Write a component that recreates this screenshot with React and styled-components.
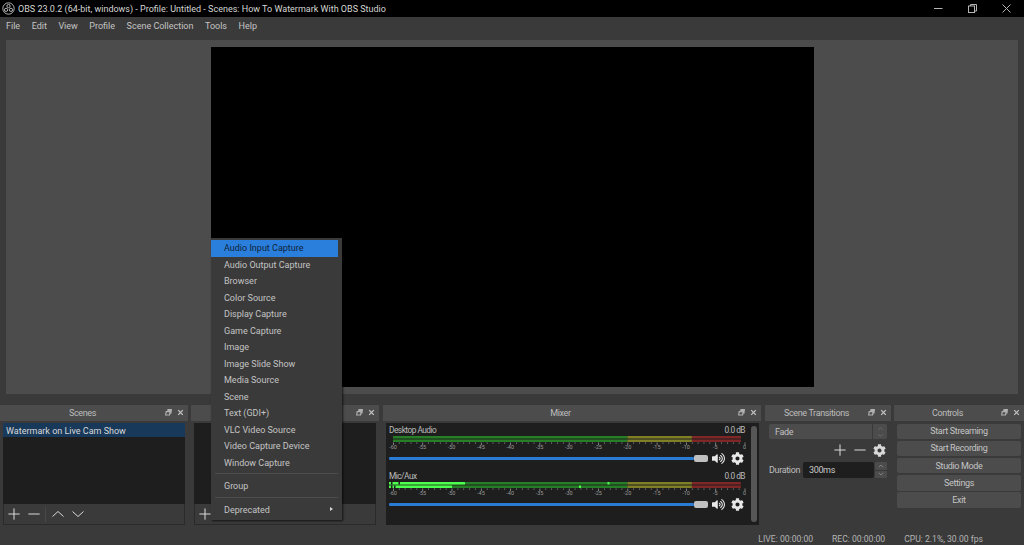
import React from 'react';
import styled, { createGlobalStyle } from 'styled-components';
import { FaCog, FaVolumeUp } from 'react-icons/fa';
import { Plus, Minus, ChevronUp, ChevronDown } from 'lucide-react';

const Global = createGlobalStyle`
  html, body { margin: 0; padding: 0; background: #3a3a3a; overflow: hidden; }
  * { box-sizing: border-box; }
  body { font-family: Roboto, "Open Sans", sans-serif; font-size: 9px; color: #c8c8c8; }
`;

const Page = styled.div`
  position: relative;
  width: 1024px;
  height: 545px;
  display: flex;
  flex-direction: column;
  background: #3a3a3a;
  overflow: hidden;
`;

const TitleBar = styled.div`
  height: 17px;
  background: #000;
  display: flex;
  align-items: center;
  padding-left: 2px;
  color: #d6d6d6;
`;

const TitleText = styled.span`
  margin-left: 3px;
  flex: 1;
`;

const WinBtns = styled.div`
  display: flex;
  align-items: center;
  gap: 25px;
  padding-right: 13px;
  color: #b5b5b5;
`;

const MenuBar = styled.div`
  height: 17px;
  display: flex;
  align-items: center;
  padding-left: 6px;
  gap: 11.500px;
  color: #c4c4c4;
`;

const PreviewPanel = styled.div`
  margin: 6px 6px 0;
  height: 354px;
  background: #4c4c4c;
  display: flex;
  justify-content: center;
  align-items: center;
`;

const PreviewScreen = styled.div`
  width: 603px;
  height: 340px;
  background: #000;
`;

const Docks = styled.div`
  margin-top: 11px;
  display: flex;
  letter-spacing: -.35px;
`;

const Dock = styled.div`
  width: ${p => p.$w}px;
  margin-left: ${p => p.$ml || 0}px;
  display: flex;
  flex-direction: column;
`;

const DockTitle = styled.div`
  position: relative;
  height: 16px;
  padding-right: 23px;
  background: #4c4c4c;
  display: flex;
  align-items: center;
  justify-content: center;
  color: #bdbdbd;
`;

const DockBtns = styled.div`
  position: absolute;
  right: 4px;
  top: 4px;
  display: flex;
  align-items: center;
  gap: 5px;
`;

const DockBody = styled.div`
  margin: 2px 3px 0;
  height: 102px;
  display: flex;
  flex-direction: column;
`;

const List = styled.div`
  flex: 1;
  background: #1e1e1e;
`;

const SelectedRow = styled.div`
  height: 14px;
  background: #19395a;
  color: #d8d8d8;
  letter-spacing: 0;
  padding: 1px 0 0 3px;
  line-height: 14px;
`;

const ListToolbar = styled.div`
  height: 21px;
  background: #3a3a3a;
  border: 1px solid #2a2a2a;
  border-top: 0;
  display: flex;
  align-items: center;
  padding-left: 1px;
  gap: 2px;
  color: #d8d8d8;
`;

const ToolSep = styled.div`
  width: 1px;
  height: 15px;
  background: #484848;
  margin-right: 1px;
`;

const MixerBody = styled.div`
  margin: 2px 2px 0 3px;
  height: 102px;
  background: #1e1e1e;
  display: flex;
  padding: 3px 2px 3px 3px;
`;

const Channels = styled.div`
  width: 357px;
  flex: none;
  display: flex;
  flex-direction: column;
  gap: 7px;
`;

const Channel = styled.div`
  display: flex;
  flex-direction: column;
`;

const ChannelHead = styled.div`
  display: flex;
  justify-content: space-between;
  height: 9px;
  line-height: 9px;
  padding-right: 1px;
  font-size: 8.300px;
  letter-spacing: -.5px;
  color: #bcbcbc;
`;

const SliderRow = styled.div`
  display: flex;
  align-items: center;
  height: 13px;
  color: #e8e8e8;
`;

const SliderTrack = styled.div`
  width: 305px;
  height: 3px;
  background: #2a7bd4;
  border-radius: 1px;
`;

const SliderHandle = styled.div`
  width: 14px;
  height: 7px;
  background: #c0c0c0;
  border-radius: 2px;
`;

const VolIcon = styled.span`
  display: flex;
  margin-left: 4px;
  width: 19px;
`;

const ScrollBar = styled.div`
  width: 6px;
  flex: none;
  margin-left: 5px;
  background: #565656;
  border-radius: 3px;
`;

const TransBody = styled.div`
  margin: 3px 4px 0;
  display: flex;
  flex-direction: column;
  height: 101px;
`;

const Combo = styled.div`
  height: 15px;
  background: #4c4c4c;
  border-radius: 2px;
  display: flex;
  align-items: center;
  justify-content: space-between;
  padding-left: 6px;
  color: #c0c0c0;
`;

const ComboArrows = styled.div`
  width: 15px;
  height: 15px;
  border-left: 1px solid #3a3a3a;
  display: flex;
  flex-direction: column;
  align-items: center;
  justify-content: center;
  color: #7d7d7d;
`;

const TransTools = styled.div`
  display: flex;
  justify-content: flex-end;
  align-items: center;
  gap: 2px;
  height: 20px;
  padding-right: 1px;
  margin-top: 1px;
  color: #d8d8d8;
`;

const DurationRow = styled.div`
  display: flex;
  align-items: center;
  height: 16px;
  margin-top: 2px;
  color: #bdbdbd;
`;

const DurationLabel = styled.span`
  width: 34px;
  flex: none;
`;

const DurationInput = styled.div`
  width: 72px;
  height: 16px;
  background: #1e1e1e;
  border-radius: 2px;
  padding-left: 6px;
  line-height: 16px;
  color: #c8c8c8;
`;

const Spin = styled.div`
  margin-left: 1px;
  width: 12px;
  display: flex;
  flex-direction: column;
  gap: 1px;
`;

const SpinBtn = styled.div`
  height: 7.5px;
  background: #4c4c4c;
  border-radius: 1px;
  display: flex;
  align-items: center;
  justify-content: center;
  color: #9a9a9a;
`;

const ControlsBody = styled.div`
  margin: 2.5px 3px 0;
  display: flex;
  flex-direction: column;
  gap: 1.7px;
`;

const ControlButton = styled.div`
  height: 15.5px;
  background: #4c4c4c;
  border-radius: 2px;
  display: flex;
  align-items: center;
  justify-content: center;
  color: #c4c4c4;
`;

const StatusBar = styled.div`
  margin-top: 8px;
  display: flex;
  justify-content: flex-end;
  gap: 19px;
  padding-right: 41px;
  height: 12px;
  line-height: 12px;
  font-size: 8.600px;
  color: #b4b4b4;
`;

const ContextMenu = styled.div`
  position: absolute;
  left: 211px;
  top: 238px;
  width: 131px;
  height: 282px;
  background: #3a3a3a;
  padding: 2px 4px 0 0;
  box-shadow: 1px 1px 2px rgba(0, 0, 0, .7);
`;

const MenuItem = styled.div`
  position: relative;
  height: 16.5px;
  line-height: 16.5px;
  padding-left: 13px;
  background: ${p => (p.$active ? '#2a7fdc' : 'transparent')};
  color: ${p => (p.$active ? '#10233a' : '#c4c4c4')};
`;

const SubArrow = styled.span`
  position: absolute;
  right: 5px;
  top: 5px;
  width: 0;
  height: 0;
  border-left: 3px solid #d8d8d8;
  border-top: 2.5px solid transparent;
  border-bottom: 2.5px solid transparent;
`;

const MenuSep = styled.div`
  height: 1px;
  background: #4c4c4c;
  margin: 2px 0 4px 4px;
`;

const ObsLogo = () => (
  <svg width="13" height="13" viewBox="0 0 24 24" fill="none" stroke="#cfcfcf" strokeWidth="1.6">
    <circle cx="12" cy="12" r="10.5" />
    <circle cx="12" cy="7.5" r="3" />
    <circle cx="7.5" cy="14.5" r="3" />
    <circle cx="16.5" cy="14.5" r="3" />
  </svg>
);

const WinMin = () => (
  <svg width="9" height="9" viewBox="0 0 9 9"><path d="M0 4.5h8.500" stroke="currentColor" /></svg>
);
const WinRestore = () => (
  <svg width="9" height="9" viewBox="0 0 9 9" fill="none" stroke="currentColor">
    <rect x=".5" y="2" width="6" height="6.500" /><path d="M2.500 2V.5h6v6.500H6.500" />
  </svg>
);
const WinClose = () => (
  <svg width="9" height="9" viewBox="0 0 9 9"><path d="M.5.5l8 8M8.500.5l-8 8" stroke="currentColor" /></svg>
);

const DockFloat = () => (
  <svg width="7" height="7" viewBox="0 0 7 7" fill="#b0b0b0">
    <path d="M2.500 0H7L6.500 4.500H5.500L5 6.500H0L.7 2h1.500zM1.700 3.200L1.300 5.500h2.700L4.400 3.200z" />
  </svg>
);
const DockClose = () => (
  <svg width="7" height="7" viewBox="0 0 7 7"><path d="M1.200 1.200l4.600 4.600M5.800 1.200l-4.600 4.600" stroke="#c8c8c8" strokeWidth="1.200" /></svg>
);

const WideUp = () => (
  <svg width="18" height="18" viewBox="0 0 18 18" fill="none" stroke="currentColor"><path d="M3.500 11.500L9 6.500l5.500 5" /></svg>
);
const WideDown = () => (
  <svg width="18" height="18" viewBox="0 0 18 18" fill="none" stroke="currentColor"><path d="M3.500 6.500L9 11.500l5.500-5" /></svg>
);

const labels = [-60, -55, -50, -45, -40, -35, -30, -25, -20, -15, -10, -5, 0];
const px = db => 4 + (db + 60) * 5.86;
const ticks = Array.from({ length: 61 }, (_, i) => i - 60);

// two channel bars, tick ruler and db labels
const Meter = ({ levels = [], peaks = [], gaps = [] }) => (
  <svg width="357" height="17" viewBox="0 0 357 17" style={{ display: 'block', letterSpacing: 0 }}>
    {[0, 3.5].map((y, ch) => (
      <g key={ch}>
        <rect x="4" y={y + 1} width="234.400" height="2.500" fill="#267f26" />
        <rect x="238.400" y={y + 1} width="64.500" height="2.500" fill="#7f7f26" />
        <rect x="302.900" y={y + 1} width="49" height="2.500" fill="#7f2626" />
        {levels[ch] && <rect x="0" y={y + 1} width={levels[ch]} height="2.500" fill="#4cff4c" />}
        {(gaps[ch] || []).map(p => <rect key={p} x={p} y={y + 1} width="1.500" height="2.500" fill="#1e1e1e" />)}
        {(peaks[ch] || []).map(p => <rect key={p} x={p} y={y + 1} width="2" height="2.500" fill="#4cff4c" />)}
      </g>
    ))}
    {ticks.map(d => (
      <rect key={d} x={px(d)} y="7.500" width=".8" height={d % 5 === 0 ? 2.5 : 1.2} fill="#9a9a9a" />
    ))}
    {labels.map(d => (
      <text key={d} x={px(d)} y="14" fontSize="5.500" fill="#9a9a9a" textAnchor="middle" fontFamily="Roboto, sans-serif">{d}</text>
    ))}
  </svg>
);

const MixerChannel = ({ name, levels, peaks, gaps }) => (
  <Channel>
    <ChannelHead><span>{name}</span><span>0.0 dB</span></ChannelHead>
    <Meter levels={levels} peaks={peaks} gaps={gaps} />
    <SliderRow>
      <SliderTrack />
      <SliderHandle />
      <VolIcon><FaVolumeUp size={13} /></VolIcon>
      <FaCog size={13} />
    </SliderRow>
  </Channel>
);

const DockHeader = ({ title }) => (
  <DockTitle>
    {title}
    <DockBtns><DockFloat /><DockClose /></DockBtns>
  </DockTitle>
);

const menuItems = [
  'Audio Input Capture', 'Audio Output Capture', 'Browser', 'Color Source', 'Display Capture',
  'Game Capture', 'Image', 'Image Slide Show', 'Media Source', 'Scene', 'Text (GDI+)',
  'VLC Video Source', 'Video Capture Device', 'Window Capture',
];

export default function App() {
  return (
    <Page>
      <Global />
      <TitleBar>
        <ObsLogo />
        <TitleText>OBS 23.0.2 (64-bit, windows) - Profile: Untitled - Scenes: How To Watermark With OBS Studio</TitleText>
        <WinBtns><WinMin /><WinRestore /><WinClose /></WinBtns>
      </TitleBar>
      <MenuBar>
        {['File', 'Edit', 'View', 'Profile', 'Scene Collection', 'Tools', 'Help'].map(m => <span key={m}>{m}</span>)}
      </MenuBar>
      <PreviewPanel><PreviewScreen /></PreviewPanel>
      <Docks>
        <Dock $w={188}>
          <DockHeader title="Scenes" />
          <DockBody>
            <List><SelectedRow>Watermark on Live Cam Show</SelectedRow></List>
            <ListToolbar>
              <Plus size={18} strokeWidth={1.4} />
              <Minus size={18} strokeWidth={1.4} />
              <ToolSep />
              <WideUp />
              <WideDown />
            </ListToolbar>
          </DockBody>
        </Dock>
        <Dock $w={188} $ml={3}>
          <DockHeader />
          <DockBody>
            <List />
            <ListToolbar><Plus size={18} strokeWidth={1.4} /></ListToolbar>
          </DockBody>
        </Dock>
        <Dock $w={378} $ml={4}>
          <DockHeader title="Mixer" />
          <MixerBody>
            <Channels>
              <MixerChannel name="Desktop Audio" />
              <MixerChannel
                name="Mic/Aux"
                levels={[76, 63]}
                peaks={[[218.5], [190]]}
                gaps={[[2, 9.5], [2, 5]]}
              />
            </Channels>
            <ScrollBar />
          </MixerBody>
        </Dock>
        <Dock $w={126} $ml={4}>
          <DockHeader title="Scene Transitions" />
          <TransBody>
            <Combo>
              Fade
              <ComboArrows>
                <ChevronUp size={7} />
                <ChevronDown size={7} />
              </ComboArrows>
            </Combo>
            <TransTools>
              <Plus size={18} strokeWidth={1.4} />
              <Minus size={18} strokeWidth={1.4} />
              <FaCog size={13} style={{ marginLeft: 2 }} />
            </TransTools>
            <DurationRow>
              <DurationLabel>Duration</DurationLabel>
              <DurationInput>300ms</DurationInput>
              <Spin>
                <SpinBtn><ChevronUp size={8} /></SpinBtn>
                <SpinBtn><ChevronDown size={8} /></SpinBtn>
              </Spin>
            </DurationRow>
          </TransBody>
        </Dock>
        <Dock $w={130} $ml={3}>
          <DockHeader title="Controls" />
          <ControlsBody>
            {['Start Streaming', 'Start Recording', 'Studio Mode', 'Settings', 'Exit'].map(b => (
              <ControlButton key={b}>{b}</ControlButton>
            ))}
          </ControlsBody>
        </Dock>
      </Docks>
      <StatusBar>
        <span>LIVE: 00:00:00</span>
        <span>REC: 00:00:00</span>
        <span>CPU: 2.1%, 30.00 fps</span>
      </StatusBar>
      <ContextMenu>
        {menuItems.map((m, i) => <MenuItem key={m} $active={i === 0}>{m}</MenuItem>)}
        <MenuSep />
        <MenuItem>Group</MenuItem>
        <MenuSep />
        <MenuItem>Deprecated<SubArrow /></MenuItem>
      </ContextMenu>
    </Page>
  );
}
